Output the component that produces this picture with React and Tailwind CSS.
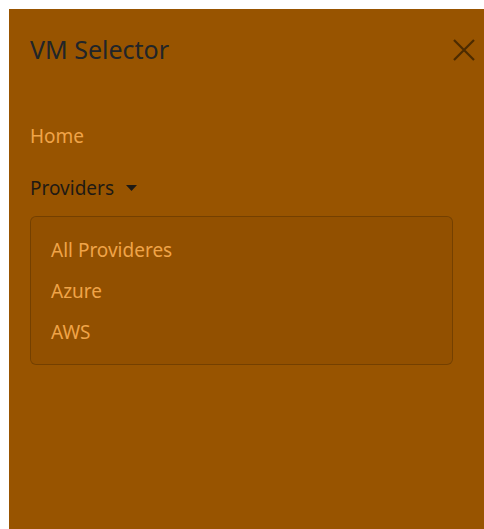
export default function App() {
	return (
		<div className="h-[529px] bg-white pl-[9px] pt-[9px]" style={{ fontFamily: '"Noto Sans", "Open Sans", sans-serif' }}>
			<div className="h-full bg-[#985400]">
				{/* Header */}
				<div className="flex items-center justify-between pl-[21px] pr-[4px] pt-[24px]">
					<h5 className="text-[25px] leading-[33px] text-[#212529]">VM Selector</h5>
					<button className="flex h-[33px] w-[33px] items-center justify-center opacity-60">
						<svg width="22" height="22" viewBox="0 0 22 22" fill="none" stroke="#1a1000" strokeWidth="2.2">
							<path d="M1 1L21 21M21 1L1 21" />
						</svg>
					</button>
				</div>

				{/* Nav */}
				<div className="mt-[52px] px-[21px]">
					<a className="block text-[19px] leading-[36px] text-[#f0a448]">Home</a>
					<button className="mt-[16px] flex items-center gap-[12px] text-[19px] leading-[36px] text-[#1f1a14]">
						Providers
						<svg width="11" height="6" viewBox="0 0 11 6" fill="#1f1a14">
							<path d="M0 0H11L5.5 6Z" />
						</svg>
					</button>
					<div className="mt-[10px] mr-[10px] rounded-[6px] border border-black/20 bg-black/[0.04] px-[20px] pt-[13px] pb-[11px]">
						<a className="block text-[19px] leading-[41px] text-[#f0a448]">All Provideres</a>
						<a className="block text-[19px] leading-[41px] text-[#f0a448]">Azure</a>
						<a className="block text-[19px] leading-[41px] text-[#f0a448]">AWS</a>
					</div>
				</div>
			</div>
		</div>
	);
}
